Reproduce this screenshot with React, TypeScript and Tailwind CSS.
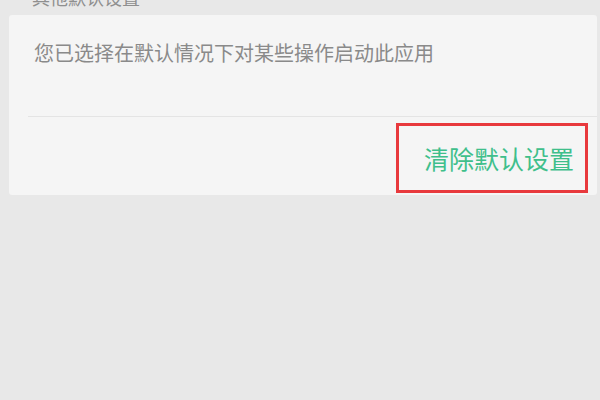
export default function App() {
  const font = { fontFamily: '"Noto Sans CJK SC", "Noto Sans", sans-serif' };

  return (
    <div className="h-[400px] w-[600px] overflow-hidden bg-[#e8e8e8]" style={font}>
      <div className="-mt-[12px] pl-[32px] text-[18px] leading-[18px] text-[#8f8f8f]">
        其他默认设置
      </div>

      <div className="ml-[9px] mr-[3px] mt-[9px] rounded-[3px] bg-[#f5f5f5]">
        <div className="pl-[25px] pt-[28px] text-[20px] leading-[20px] text-[#8a8a8a]">
          您已选择在默认情况下对某些操作启动此应用
        </div>
        <div className="ml-[19px] mt-[53px] h-px bg-[#e4e4e4]" />
        <div className="flex justify-end pb-[2px] pr-[9px] pt-[6px]">
          <div className="flex h-[70px] w-[192px] items-center border-[3px] border-[#e8393d] pl-[25px]">
            <span className="text-[25px] leading-[25px] text-[#3fbf8b]">清除默认设置</span>
          </div>
        </div>
      </div>
    </div>
  );
}
